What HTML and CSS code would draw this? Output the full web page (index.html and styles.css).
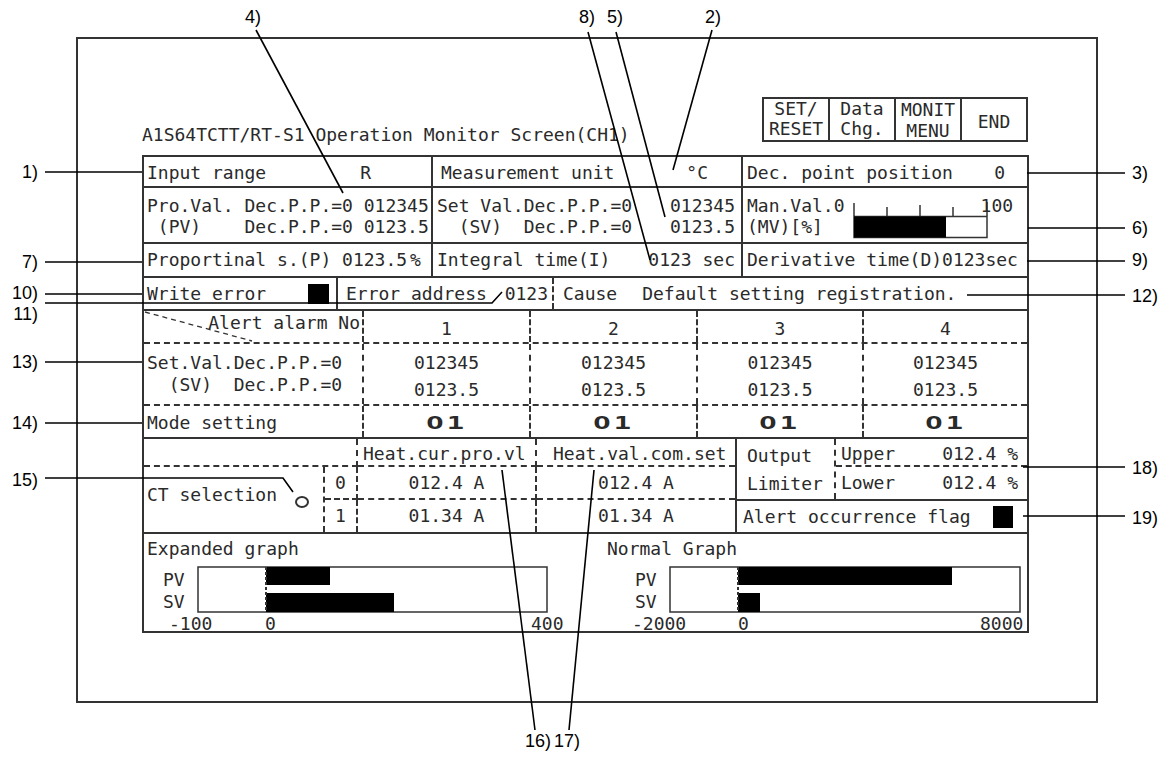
FILE: index.html
```html
<!DOCTYPE html>
<html lang="en">
<head>
  <meta charset="UTF-8">
  <title>A1S64TCTT/RT-S1 Operation Monitor Screen</title>
  <link rel="stylesheet" href="styles.css">
</head>
<body>
<div class="sheet">
  <div class="frame">
    <div class="head">
      <div class="title">A1S64TCTT/RT-S1 Operation Monitor Screen(CH1)</div>
      <div class="keys">
        <div class="key">SET/<br>RESET</div>
        <div class="key">Data<br>Chg.</div>
        <div class="key monit">MONIT<br>MENU</div>
        <div class="key end">END</div>
      </div>
    </div>

    <div class="screen">
      <!-- range / unit / decimal point -->
      <div class="row r1">
        <div class="cell w-range solid-r between pad-range"><span>Input range</span><span>R</span></div>
        <div class="cell w-unit solid-r between pad-unit"><span>Measurement unit</span><span>°C</span></div>
        <div class="cell rest between pad-point"><span>Dec. point position</span><span>0</span></div>
      </div>

      <!-- PV / SV / MV -->
      <div class="row r2">
        <div class="cell w-range solid-r pl3">Pro.Val. Dec.P.P.=0 012345
 (PV)    Dec.P.P.=0 0123.5</div>
        <div class="cell w-unit solid-r between pl4 pr6">
          <span>Set Val.Dec.P.P.=0
  (SV)  Dec.P.P.=0</span>
          <span class="right">012345
0123.5</span>
        </div>
        <div class="cell rest pl4">
          <div class="manval">
            <span class="mv1">Man.Val.0</span>
            <span class="mv2">(MV)[%]</span>
            <svg class="mvbar" width="136" height="42" viewBox="0 0 136 42">
              <line x1="1" y1="8" x2="1" y2="21"/>
              <line x1="34" y1="12" x2="34" y2="21"/>
              <line x1="67" y1="10" x2="67" y2="21"/>
              <line x1="100" y1="12" x2="100" y2="21"/>
              <line x1="134" y1="7" x2="134" y2="21"/>
              <rect class="box" x="1" y="21.5" width="133" height="21"/>
              <rect class="fill" x="1" y="21.5" width="92" height="21"/>
            </svg>
            <span class="mv3">100</span>
          </div>
        </div>
      </div>

      <!-- PID -->
      <div class="row r3">
        <div class="cell w-range solid-r pl3">Proportinal s.(P) 0123.5<span class="pct">%</span></div>
        <div class="cell w-unit solid-r between pl4 pr6"><span>Integral time(I)</span><span>0123 sec</span></div>
        <div class="cell rest pl4">Derivative time(D)0123sec</div>
      </div>

      <!-- write error -->
      <div class="row r4">
        <div class="cell w-werr solid-r between pad-werr"><span>Write error</span><span class="blk"></span></div>
        <div class="cell w-eaddr dash-r between pad-eaddr"><span>Error address</span><span>0123</span></div>
        <div class="cell rest pad-cause"><span>Cause</span><span class="cause-text">Default setting registration.</span></div>
      </div>

      <!-- alert alarm -->
      <div class="row r5 dashed">
        <div class="cell w-no dash-r alarm-no">
          <svg class="diag" width="218" height="31"><line x1="1" y1="1" x2="108" y2="30"/></svg>
          <span class="label">Alert alarm No</span>
        </div>
        <div class="cell w-ch dash-r center num">1</div>
        <div class="cell w-ch dash-r center num">2</div>
        <div class="cell w-ch2 dash-r center num">3</div>
        <div class="cell rest center num">4</div>
      </div>

      <div class="row r6 dashed">
        <div class="cell w-no dash-r sv-name">Set.Val.Dec.P.P.=0
  (SV)  Dec.P.P.=0</div>
        <div class="cell w-ch dash-r sv-val">012345
0123.5</div>
        <div class="cell w-ch dash-r sv-val">012345
0123.5</div>
        <div class="cell w-ch2 dash-r sv-val">012345
0123.5</div>
        <div class="cell rest sv-val">012345
0123.5</div>
      </div>

      <div class="row r7">
        <div class="cell w-no dash-r pl3 mode-name">Mode setting</div>
        <div class="cell w-ch dash-r center mode"><span>O1</span></div>
        <div class="cell w-ch dash-r center mode"><span>O1</span></div>
        <div class="cell w-ch2 dash-r center mode"><span>O1</span></div>
        <div class="cell rest center mode"><span>O1</span></div>
      </div>

      <!-- heater current / output limiter -->
      <div class="row ct">
        <div class="ct-left">
          <div class="ct-blank"></div>
          <div class="ct-head pl5">Heat.cur.pro.vl</div>
          <div class="ct-head last pl16">Heat.val.com.set</div>
          <div class="ct-sel">CT selection<span class="ring"></span></div>
          <div class="ct-cell idx b">0</div>
          <div class="ct-cell b">012.4 A</div>
          <div class="ct-cell b last">012.4 A</div>
          <div class="ct-cell idx">1</div>
          <div class="ct-cell">01.34 A</div>
          <div class="ct-cell last">01.34 A</div>
        </div>
        <div class="ct-right">
          <div class="limiter">
            <div class="lim-name">Output
Limiter</div>
            <div class="lim-vals">
              <div class="lim-up"><span>Upper</span><span>012.4 %</span></div>
              <div class="lim-lo"><span>Lower</span><span>012.4 %</span></div>
            </div>
          </div>
          <div class="flag"><span>Alert occurrence flag</span><span class="blk tall"></span></div>
        </div>
      </div>

      <!-- graphs -->
      <div class="row graph">
        <div class="gpanel left">
          <div class="gtitle">Expanded graph</div>
          <svg class="plot" width="440" height="71">
            <text x="16" y="19">PV</text>
            <text x="16" y="41">SV</text>
            <rect class="box" x="51" y="7" width="349" height="45"/>
            <rect class="bar" x="119" y="7" width="64" height="18"/>
            <rect class="bar" x="119" y="33" width="128" height="19"/>
            <line class="zero" x1="119" y1="7" x2="119" y2="52"/>
            <text x="22" y="63">-100</text>
            <text x="118" y="63">0</text>
            <text x="384" y="63">400</text>
          </svg>
        </div>
        <div class="gpanel">
          <div class="gtitle">Normal Graph</div>
          <svg class="plot" width="420" height="71">
            <text x="28" y="19">PV</text>
            <text x="28" y="41">SV</text>
            <rect class="box" x="63" y="7" width="350" height="45"/>
            <rect class="bar" x="131" y="7" width="214" height="18"/>
            <rect class="bar" x="131" y="33" width="22" height="19"/>
            <line class="zero" x1="131" y1="7" x2="131" y2="52"/>
            <text x="25" y="63">-2000</text>
            <text x="131" y="63">0</text>
            <text x="373" y="63">8000</text>
          </svg>
        </div>
      </div>
    </div>
  </div>

  <!-- callouts -->
  <svg class="callouts" width="1175" height="775">
    <g class="leaders">
      <line x1="45" y1="172" x2="142" y2="172"/>
      <line x1="45" y1="262" x2="142" y2="262"/>
      <line x1="45" y1="294" x2="142" y2="294"/>
      <polyline points="45,303 492,303 502,292"/>
      <line x1="45" y1="362" x2="142" y2="362"/>
      <line x1="45" y1="423" x2="142" y2="423"/>
      <polyline points="45,478 283,478 293,492"/>
      <line x1="1027" y1="173" x2="1125" y2="173"/>
      <line x1="1028" y1="228" x2="1125" y2="228"/>
      <line x1="1027" y1="261" x2="1125" y2="261"/>
      <line x1="967" y1="295" x2="1125" y2="295"/>
      <line x1="1023" y1="467" x2="1125" y2="467"/>
      <line x1="1023" y1="516" x2="1125" y2="516"/>
      <line x1="256" y1="30" x2="343" y2="193"/>
      <line x1="588" y1="32" x2="650" y2="260"/>
      <line x1="616" y1="32" x2="665" y2="217"/>
      <line x1="712" y1="30" x2="673" y2="170"/>
      <line x1="502" y1="470" x2="535" y2="730"/>
      <line x1="594" y1="470" x2="569" y2="730"/>
    </g>
    <g class="nums end">
      <text x="38" y="172">1)</text>
      <text x="38" y="262">7)</text>
      <text x="38" y="293">10)</text>
      <text x="38" y="314">11)</text>
      <text x="38" y="362">13)</text>
      <text x="38" y="423">14)</text>
      <text x="38" y="480">15)</text>
    </g>
    <g class="nums">
      <text x="1132" y="173">3)</text>
      <text x="1132" y="228">6)</text>
      <text x="1132" y="260">9)</text>
      <text x="1132" y="296">12)</text>
      <text x="1132" y="468">18)</text>
      <text x="1132" y="518">19)</text>
    </g>
    <g class="nums mid">
      <text x="253" y="17">4)</text>
      <text x="587" y="17">8)</text>
      <text x="615" y="17">5)</text>
      <text x="713" y="17">2)</text>
      <text x="538" y="741">16)</text>
      <text x="567" y="741">17)</text>
    </g>
  </svg>
</div>
</body>
</html>
```

FILE: styles.css
```css
body {
    margin: 0;
    background-color: #fff;
    color: #2a2a2a;
    font-family: "DejaVu Sans Mono", "Liberation Mono", monospace;
}

.sheet {
    position: relative;
    width: 1175px;
    height: 775px;
    padding-top: 37px;
    box-sizing: border-box;
    overflow: hidden;
}

.frame {
    width: 1022px;
    height: 666px;
    margin-left: 76px;
    border: 2px solid #333;
    box-sizing: border-box;
}

/* title + keys */
.head {
    display: flex;
    align-items: flex-end;
    width: 887px;
    margin: 58px 0 0 64px;
    font-size: 18px;
}

.title {
    line-height: 22px;
    margin-bottom: -4px;
    white-space: pre;
}

.keys {
    display: flex;
    height: 45px;
    margin-left: auto;
    margin-right: 1px;
    border: 2px solid #333;
    box-sizing: border-box;
}

.key {
    width: 64px;
    text-align: center;
    line-height: 20px;
}
.key + .key { border-left: 2px solid #333; }
.key.monit { line-height: 21px; }
.key.end { padding-top: 13px; }

/* main screen */
.screen {
    width: 887px;
    margin: 13px 0 0 64px;
    border: 2px solid #333;
    box-sizing: border-box;
    font-size: 18px;
    line-height: 22px;
}

.row {
    display: flex;
    box-sizing: border-box;
    border-bottom: 2px solid #333;
}
.row.dashed { border-bottom-style: dashed; }

.r1 { height: 31px; }
.r2 { height: 56px; }
.r3 { height: 34px; }
.r4 { height: 33px; }
.r5 { height: 33px; }
.r6 { height: 62px; }
.r7 { height: 33px; }
.ct { height: 95px; }
.graph { height: 97px; border-bottom: none; }

.cell {
    display: flex;
    align-items: center;
    box-sizing: border-box;
    white-space: pre;
}
.cell.rest { flex: 1; }
.solid-r { border-right: 2px solid #333; }
.dash-r { border-right: 2px dashed #333; }
.between { justify-content: space-between; }
.center { justify-content: center; }
.right { text-align: right; }

.w-range { width: 289px; }
.w-unit { width: 310px; }
.w-werr { width: 194px; }
.w-eaddr { width: 216px; }
.w-no { width: 220px; }
.w-ch { width: 167px; }
.w-ch2 { width: 166px; }

.pl3 { padding-left: 3px; }
.pl4 { padding-left: 4px; }
.pl5 { padding-left: 5px; }
.pl16 { padding-left: 16px; }
.pr6 { padding-right: 6px; }

.r1 .cell { padding-top: 2px; }
.pad-range { padding: 0 60px 0 3px; }
.pad-unit { padding: 0 33px 0 8px; }
.pad-point { padding: 0 22px 0 4px; }

.r2 .cell {
    align-items: flex-start;
    padding-top: 7px;
    line-height: 21px;
}

.manval {
    display: grid;
    grid-template-columns: auto 136px auto;
    grid-template-rows: 21px 21px;
}
.mv1 { grid-column: 1; grid-row: 1; }
.mv2 { grid-column: 1; grid-row: 2; }
.mv3 { grid-column: 3; grid-row: 1; }
.mvbar {
    grid-column: 2;
    grid-row: 1 / 3;
    margin-left: 8px;
    overflow: visible;
}
.mvbar line { stroke: #333; stroke-width: 1.5; }
.mvbar .box { fill: #fff; stroke: #333; stroke-width: 1.5; }
.mvbar .fill { fill: #000; }

.pct { margin-left: 3px; }

.pad-werr { padding: 0 7px 0 3px; }
.pad-eaddr { padding: 0 4px 0 8px; }
.pad-cause { padding-left: 9px; }
.cause-text { margin-left: 25px; }

.blk {
    display: block;
    width: 21px;
    height: 20px;
    background-color: #000;
}
.blk.tall { width: 20px; height: 22px; }

/* alarm table */
.alarm-no {
    position: relative;
    justify-content: flex-end;
    align-items: flex-start;
    padding: 1px 2px 0 0;
}
.alarm-no .label {
    position: relative;
}
.diag {
    position: absolute;
    left: 0;
    top: 0;
}
.diag line {
    stroke: #333;
    stroke-width: 1.3;
    stroke-dasharray: 5 4;
}

.num { padding-top: 4px; }

.sv-name {
    align-items: flex-start;
    padding: 8px 0 0 3px;
}
.sv-val {
    align-items: flex-start;
    justify-content: center;
    text-align: center;
    padding-top: 5px;
    line-height: 27px;
}

.mode-name { padding-top: 3px; }
.mode { padding-top: 3px; }
.mode span {
    display: inline-block;
    font-weight: bold;
    letter-spacing: 2px;
    transform: scaleX(1.6);
}

/* heater current block */
.ct-left {
    display: grid;
    grid-template-columns: 181px 33px 179px 1fr;
    grid-template-rows: 28px 33px 32px;
    width: 593px;
    border-right: 2px solid #333;
    box-sizing: border-box;
}
.ct-left > div {
    box-sizing: border-box;
    white-space: pre;
}
.ct-blank {
    grid-column: 1 / 3;
    border-right: 2px dashed #333;
    border-bottom: 2px dashed #333;
}
.ct-head {
    display: flex;
    align-items: flex-end;
    border-right: 2px dashed #333;
    border-bottom: 2px dashed #333;
}
.ct-head.last { border-right: none; }
.ct-sel {
    grid-column: 1;
    grid-row: 2 / 4;
    border-right: 2px dashed #333;
    padding: 17px 0 0 3px;
}
.ring {
    display: inline-block;
    width: 10px;
    height: 8px;
    margin-left: 18px;
    border: 2px solid #333;
    border-radius: 50%;
    vertical-align: -7px;
}
.ct-cell {
    display: flex;
    align-items: center;
    justify-content: center;
    border-right: 2px dashed #333;
}
.ct-cell.b { border-bottom: 2px dashed #333; }
.ct-cell.last { border-right: none; }

.ct-right {
    flex: 1;
    display: flex;
    flex-direction: column;
}
.limiter {
    display: flex;
    height: 62px;
    border-bottom: 2px solid #333;
    box-sizing: border-box;
}
.lim-name {
    width: 99px;
    box-sizing: border-box;
    border-right: 2px dashed #333;
    padding: 3px 0 0 10px;
    line-height: 28px;
    white-space: pre;
}
.lim-vals {
    flex: 1;
    display: flex;
    flex-direction: column;
}
.lim-up, .lim-lo {
    display: flex;
    justify-content: space-between;
    padding: 0 9px 0 5px;
    white-space: pre;
}
.lim-up {
    height: 28px;
    align-items: flex-end;
    border-bottom: 2px dashed #333;
    box-sizing: border-box;
}
.lim-lo {
    flex: 1;
    align-items: center;
}
.flag {
    flex: 1;
    display: flex;
    align-items: center;
    justify-content: space-between;
    padding: 0 14px 0 6px;
    white-space: pre;
}

/* graphs */
.gpanel {
    flex: 1;
    padding: 4px 0 0 3px;
}
.gpanel.left {
    flex: none;
    width: 460px;
    box-sizing: border-box;
}
.gtitle { line-height: 22px; }
.plot {
    display: block;
    overflow: visible;
}
.plot text {
    font-family: "DejaVu Sans Mono", monospace;
    font-size: 18px;
    fill: #2a2a2a;
    dominant-baseline: central;
}
.plot .box { fill: #fff; stroke: #333; stroke-width: 1.5; }
.plot .bar { fill: #000; }
.plot .zero { stroke: #333; stroke-width: 2; stroke-dasharray: 3 2; }

/* annotation overlay */
.callouts {
    position: absolute;
    left: 0;
    top: 0;
    pointer-events: none;
}
.leaders line, .leaders polyline {
    stroke: #000;
    stroke-width: 1.6;
    fill: none;
}
.nums text {
    font-family: "Liberation Sans", Arial, sans-serif;
    font-size: 18px;
    fill: #000;
    dominant-baseline: central;
}
.nums.end text { text-anchor: end; }
.nums.mid text { text-anchor: middle; }
```
